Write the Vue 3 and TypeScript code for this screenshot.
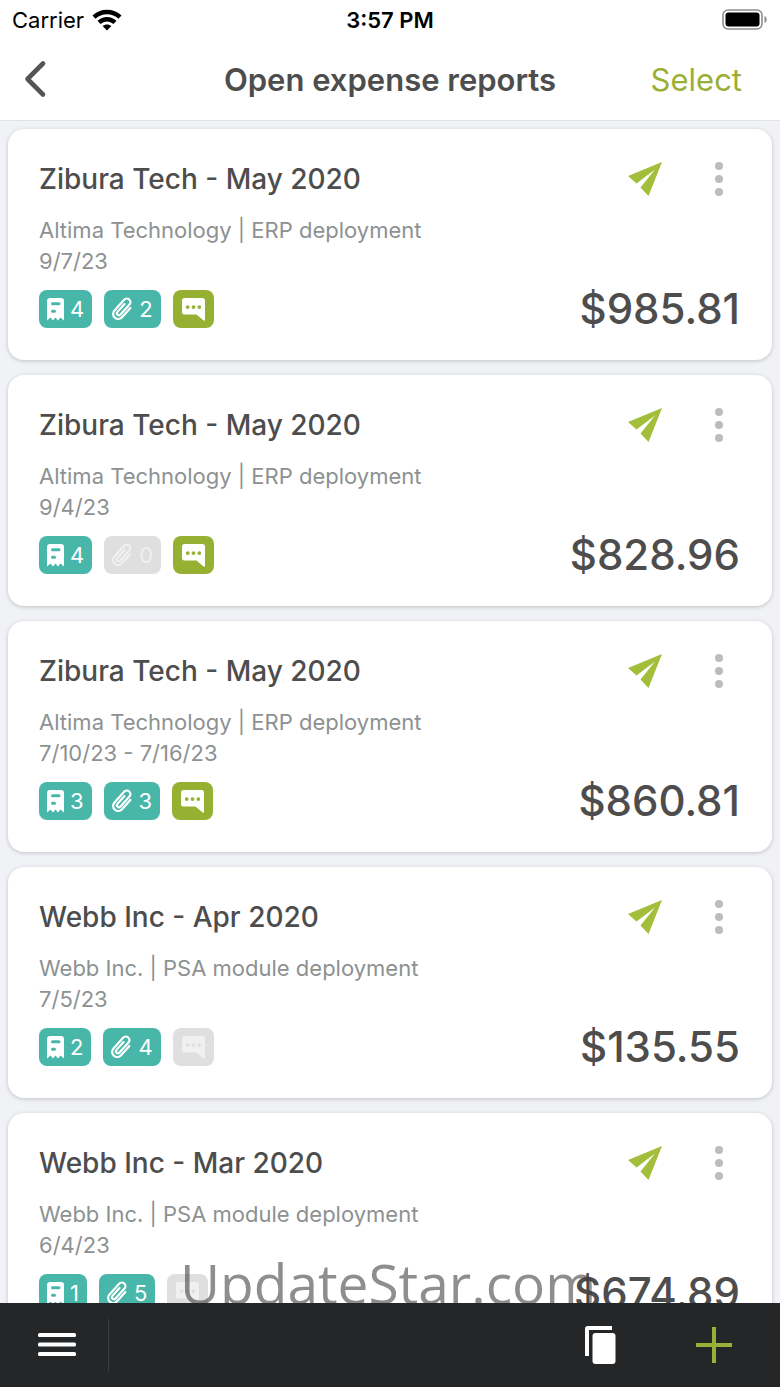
<script setup lang="ts">
interface Report {
  id: number
  name: string
  project: string
  period: string
  receipts: number
  attachments: number
  hasComment: boolean
  amount: string
}

const reports: Report[] = [
  { id: 1, name: 'Zibura Tech - May 2020', project: 'Altima Technology | ERP deployment', period: '9/7/23', receipts: 4, attachments: 2, hasComment: true, amount: '$985.81' },
  { id: 2, name: 'Zibura Tech - May 2020', project: 'Altima Technology | ERP deployment', period: '9/4/23', receipts: 4, attachments: 0, hasComment: true, amount: '$828.96' },
  { id: 3, name: 'Zibura Tech - May 2020', project: 'Altima Technology | ERP deployment', period: '7/10/23 - 7/16/23', receipts: 3, attachments: 3, hasComment: true, amount: '$860.81' },
  { id: 4, name: 'Webb Inc - Apr 2020', project: 'Webb Inc. | PSA module deployment', period: '7/5/23', receipts: 2, attachments: 4, hasComment: false, amount: '$135.55' },
  { id: 5, name: 'Webb Inc - Mar 2020', project: 'Webb Inc. | PSA module deployment', period: '6/4/23', receipts: 1, attachments: 5, hasComment: false, amount: '$674.89' },
]
</script>

<template>
  <div class="screen">
    <div class="status">
      <div class="carrier">
        <span>Carrier</span>
        <svg width="30" height="22" viewBox="0 0 30 22" aria-hidden="true">
          <g fill="none" stroke="#000" stroke-width="4.4">
            <path d="M2 8.2C9.2 1.2 20.8 1.2 28 8.2" />
            <path d="M7 13.4C11.6 9.1 18.4 9.1 23 13.4" />
          </g>
          <path d="M15 21.5l-4.4-4.4c2.5-2.2 6.3-2.2 8.8 0z" />
        </svg>
      </div>
      <time class="clock">3:57 PM</time>
      <svg class="battery" width="46" height="22" viewBox="0 0 46 22" aria-hidden="true">
        <rect x="1" y="1" width="39" height="19" rx="5" fill="#fff" stroke="#8e8e8e" stroke-width="1.6" />
        <rect x="3.5" y="3.5" width="34" height="14" rx="3" />
        <path d="M42.5 7c3 1 3 6 0 7z" fill="#8e8e8e" />
      </svg>
    </div>

    <header class="nav">
      <button class="back" type="button" aria-label="Back">
        <svg width="24" height="38" viewBox="0 0 24 38" aria-hidden="true">
          <path d="M19 3.5L3.5 19L19 34.5" fill="none" stroke="#555" stroke-width="4.6" stroke-linecap="round" stroke-linejoin="round" />
        </svg>
      </button>
      <h1>Open expense reports</h1>
      <button class="select" type="button">Select</button>
    </header>

    <main class="list">
      <article v-for="report in reports" :key="report.id" class="card">
        <div class="top">
          <h2>{{ report.name }}</h2>
          <button class="send" type="button" aria-label="Submit report">
            <svg width="34" height="34" viewBox="0 0 34 34" aria-hidden="true">
              <path d="M34 0L0 14L8.5 21.5L27 7.5L12.5 25.5L20.5 34Z" fill="#a2be3a" />
            </svg>
          </button>
          <button class="more" type="button" aria-label="More actions">
            <svg width="8" height="34" viewBox="0 0 8 34" fill="#bcbcbc" aria-hidden="true">
              <circle cx="4" cy="4" r="4" />
              <circle cx="4" cy="17" r="4" />
              <circle cx="4" cy="30" r="4" />
            </svg>
          </button>
        </div>
        <p class="details">{{ report.project }}<br />{{ report.period }}</p>
        <div class="bottom">
          <span class="badge teal">
            <svg width="17" height="23" viewBox="0 0 17 23" aria-hidden="true">
              <path fill="currentColor" fill-rule="evenodd" d="M3 0H14Q17 0 17 3V22.5L13.5 19.5L11 22.5L8.5 19.5L6 22.5L3.5 19.5L0 22.5V3Q0 0 3 0ZM5.5 4.3Q4 4.3 4 5.8T5.5 7.3H12Q13.5 7.3 13.5 5.8T12 4.3ZM5.5 11.7Q4 11.7 4 13.2T5.5 14.7H7.5Q9 14.7 9 13.2T7.5 11.7Z" />
            </svg>
            {{ report.receipts }}
          </span>
          <span class="badge" :class="report.attachments ? 'teal' : 'off'">
            <svg width="21" height="24" viewBox="0 0 21 24" aria-hidden="true">
              <g transform="translate(10.5 12) rotate(42) translate(-5 -12.5)">
                <path fill="none" stroke="currentColor" stroke-width="2.2" stroke-linecap="round" d="M10.2 6.5V19A5.1 5.1 0 0 1 0 19V4.5A3.6 3.6 0 0 1 7.2 4.5V18A2 2 0 0 1 3.2 18V7.5" />
              </g>
            </svg>
            {{ report.attachments }}
          </span>
          <span class="badge comment" :class="report.hasComment ? 'green' : 'off'">
            <svg width="23" height="23" viewBox="0 0 23 23" aria-hidden="true">
              <path fill="currentColor" fill-rule="evenodd" d="M2.5 0H20.5Q23 0 23 2.5V21.5Q23 23.5 21.3 22.3L14.5 16.5H2.5Q0 16.5 0 14V2.5Q0 0 2.5 0ZM5.7 7.2a1.9 1.9 0 1 0 .01 3.8a1.9 1.9 0 1 0-.01-3.8ZM11.5 7.2a1.9 1.9 0 1 0 .01 3.8a1.9 1.9 0 1 0-.01-3.8ZM17.3 7.2a1.9 1.9 0 1 0 .01 3.8a1.9 1.9 0 1 0-.01-3.8Z" />
            </svg>
          </span>
          <strong class="amount">{{ report.amount }}</strong>
        </div>
      </article>
      <div class="watermark">UpdateStar.com</div>
    </main>

    <footer class="toolbar">
      <button class="menu" type="button" aria-label="Menu">
        <svg width="38" height="24" viewBox="0 0 38 24" fill="#fff" aria-hidden="true">
          <rect width="38" height="4" rx="1.5" />
          <rect y="9.5" width="38" height="4" rx="1.5" />
          <rect y="19" width="38" height="4" rx="1.5" />
        </svg>
      </button>
      <button class="copy" type="button" aria-label="Copy">
        <svg width="31" height="38" viewBox="0 0 31 38" fill="#fff" aria-hidden="true">
          <path d="M3 0H27V4H4V30H0V3Q0 0 3 0Z" />
          <rect x="7.5" y="7" width="23" height="31" rx="3" />
        </svg>
      </button>
      <button class="add" type="button" aria-label="Add report">
        <svg width="36" height="36" viewBox="0 0 36 36" fill="#9aaf35" aria-hidden="true">
          <path d="M16 0H20V16H36V20H20V36H16V20H0V16H16Z" />
        </svg>
      </button>
    </footer>
  </div>
</template>

<style>
body {
  margin: 0;
}
</style>

<style scoped>
.screen {
  display: flex;
  flex-direction: column;
  height: 100vh;
  overflow: hidden;
  background: #f1f2f5;
  color: #4d4d4d;
  font-family: Inter, "Liberation Sans", sans-serif;
}

button {
  display: flex;
  align-items: center;
  justify-content: center;
  padding: 0;
  border: 0;
  background: none;
  color: inherit;
  font: inherit;
  cursor: pointer;
}

svg {
  display: block;
  flex: none;
}

.status,
.nav {
  display: grid;
  flex: none;
  grid-template-columns: 1fr auto 1fr;
  align-items: center;
  box-sizing: border-box;
  background: #fff;
}

.status {
  height: 40px;
  padding: 0 12px;
  color: #000;
  font-size: 22px;
}

.carrier {
  display: flex;
  align-items: center;
  gap: 8px;
}

.clock {
  font-weight: 600;
}

.battery {
  justify-self: end;
}

.nav {
  height: 81px;
  padding: 0 24px 2px;
  border-bottom: 1px solid #e0e2e4;
  font-size: 31px;
}

.back {
  justify-self: start;
}

h1 {
  margin: 0;
  font-size: 31px;
  font-weight: 600;
}

.select {
  justify-self: end;
  margin-right: 14px;
  color: #9aaf35;
}

.list {
  position: relative;
  display: flex;
  flex: 1;
  flex-direction: column;
  gap: 15px;
  min-height: 0;
  padding: 8px 8px 0;
  overflow: hidden;
}

.card {
  flex: none;
  padding: 33px 32px 32px 31px;
  border-radius: 16px;
  background: #fff;
  box-shadow: 0 1px 4px rgba(0, 0, 0, 0.2);
}

.top {
  display: flex;
  align-items: center;
  height: 34px;
}

h2 {
  flex: 1;
  margin: 0;
  font-size: 28px;
  font-weight: 500;
}

.send {
  margin-right: 36px;
}

.more {
  width: 42px;
}

.details {
  margin: 19px 0 13px;
  color: #8d9192;
  font-size: 22px;
  line-height: 31px;
}

.bottom {
  display: flex;
  align-items: center;
  gap: 12px;
  height: 38px;
}

.badge {
  display: flex;
  align-items: center;
  gap: 6px;
  height: 38px;
  padding: 0 8px;
  border-radius: 8px;
  color: #fff;
  font-size: 22px;
}

.comment {
  padding: 0 9px;
}

.teal {
  background: #48b6a9;
}

.green {
  background: #96b032;
}

.off {
  background: #dfdfdf;
  color: #f0f0f0;
}

.amount {
  margin-left: auto;
  font-size: 42px;
  font-weight: 500;
  line-height: 38px;
}

.watermark {
  position: absolute;
  bottom: -20px;
  left: 180px;
  color: rgba(60, 60, 60, 0.58);
  font-family: "Open Sans", "Noto Sans", sans-serif;
  font-size: 55px;
  line-height: 80px;
  pointer-events: none;
}

.toolbar {
  display: flex;
  flex: none;
  align-items: center;
  height: 84px;
  padding-right: 48px;
  background: #242628;
}

.menu {
  width: 109px;
  height: 52px;
  padding-left: 5px;
  border-right: 1px solid #3c3e40;
}

.copy {
  margin-left: auto;
}

.add {
  margin-left: 80px;
}
</style>
